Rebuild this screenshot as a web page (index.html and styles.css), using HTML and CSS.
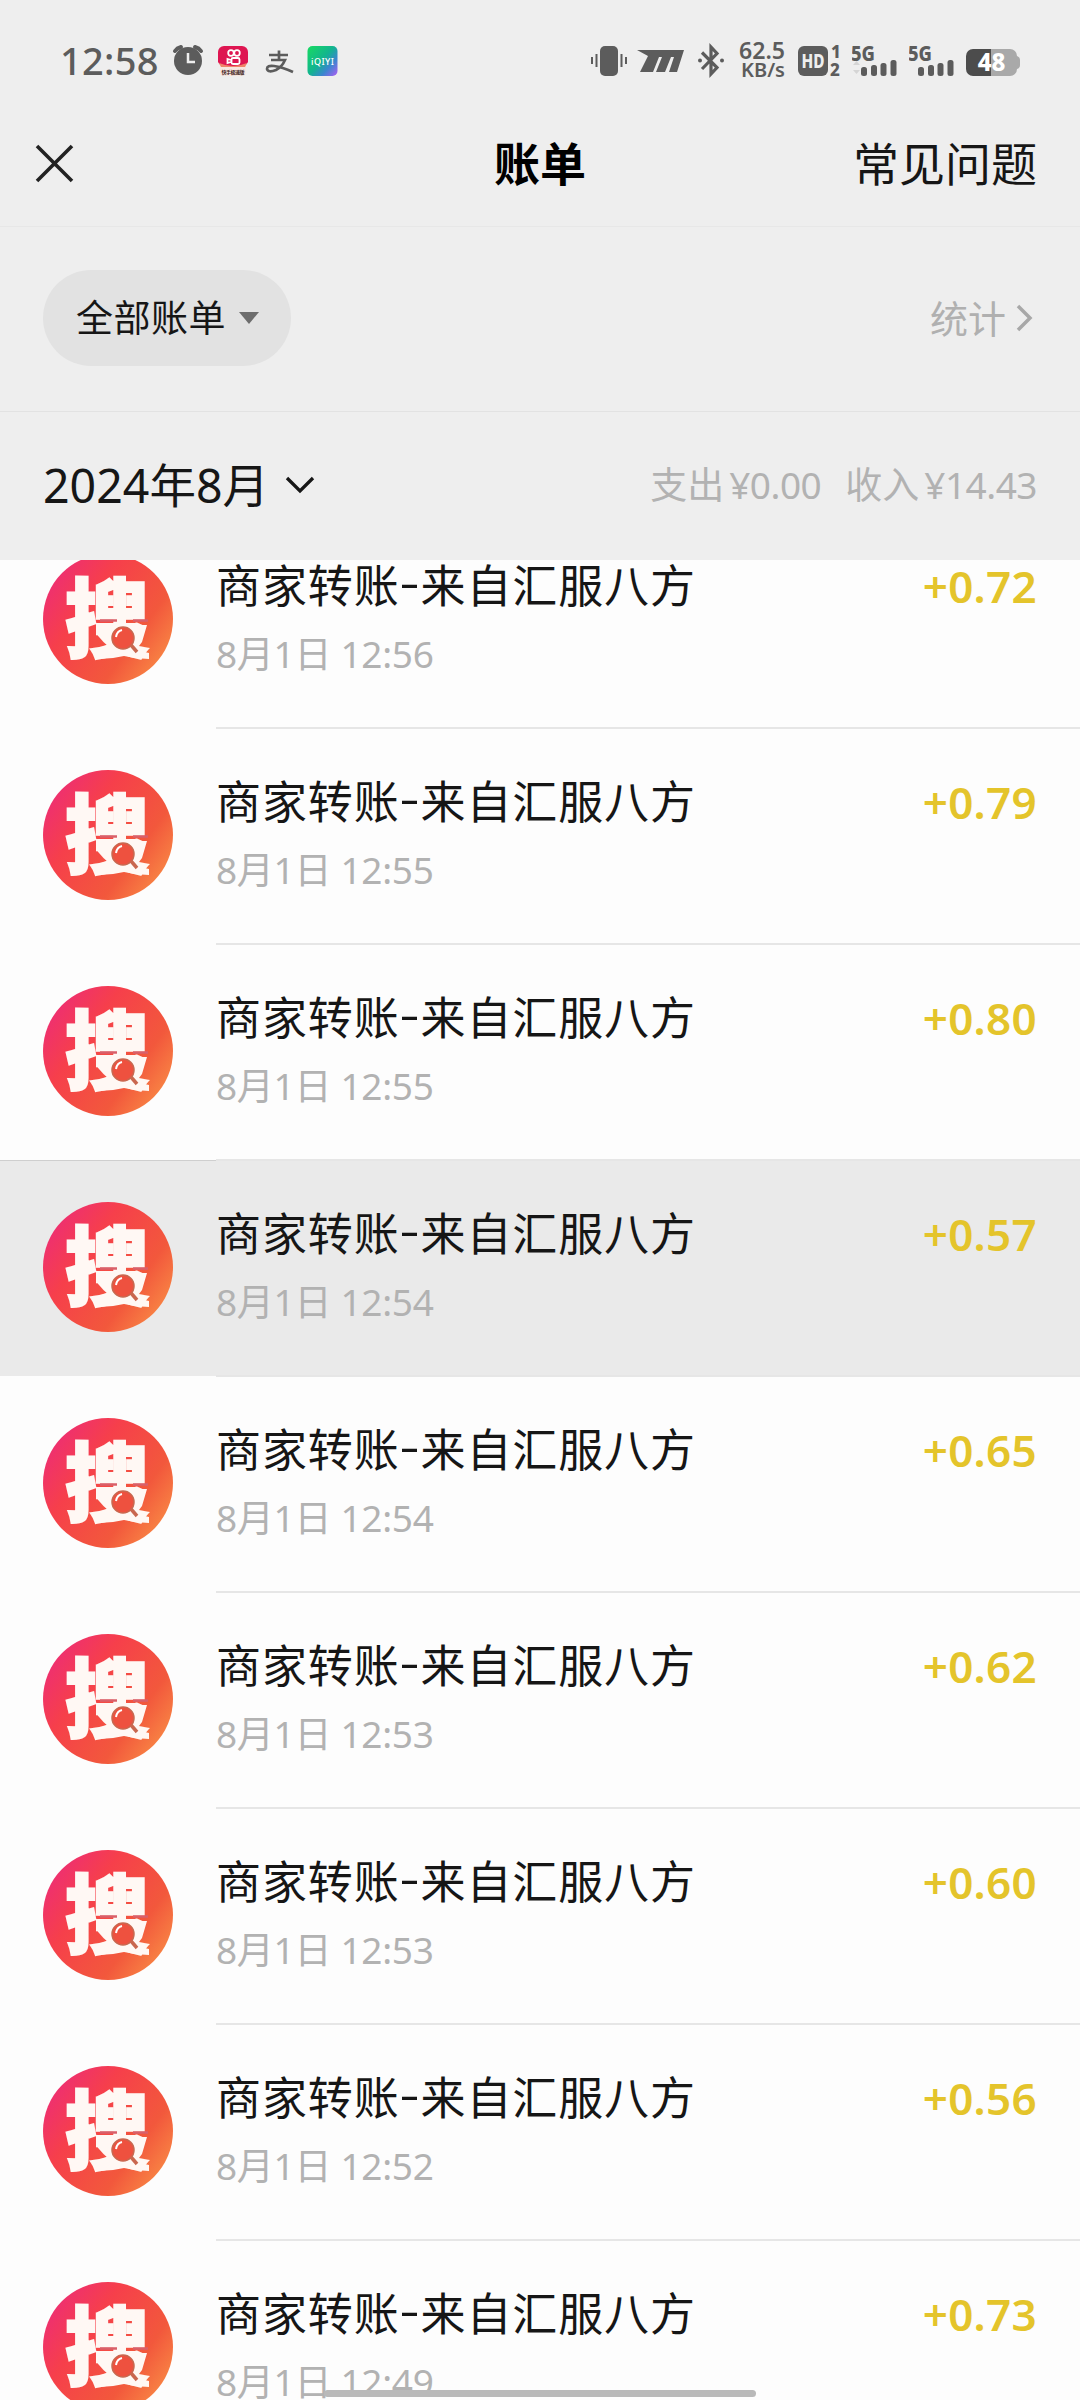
FILE: index.html
```html
<!DOCTYPE html>
<html lang="zh-CN">
<head>
<meta charset="utf-8">
<title>账单</title>
<link rel="stylesheet" href="styles.css">
</head>
<body>
<svg class="defs" width="0" height="0" aria-hidden="true">
  <defs>
    <linearGradient id="brand" x1="0.05" y1="0.2" x2="0.95" y2="0.85">
      <stop offset="0" stop-color="#ee2f72"/>
      <stop offset="0.3" stop-color="#f63f4b"/>
      <stop offset="0.72" stop-color="#f2583c"/>
      <stop offset="1" stop-color="#f98a45"/>
    </linearGradient>
    <linearGradient id="iqiyi" x1="0" y1="0.1" x2="1" y2="1">
      <stop offset="0" stop-color="#17d765"/>
      <stop offset="0.45" stop-color="#12b48f"/>
      <stop offset="0.7" stop-color="#3a86cf"/>
      <stop offset="1" stop-color="#b05cf5"/>
    </linearGradient>
    <symbol id="avatar" viewBox="0 0 130 130">
      <circle cx="65" cy="65" r="65" fill="url(#brand)"/>
      <text class="logo-char" x="64" y="97" text-anchor="middle" textLength="84" lengthAdjust="spacingAndGlyphs">搜</text>
      <path d="M55 71h49l-5 17-6 8 13 3v6q-13 0-25-3-12 3-25 3V94l8-3-8-10z" fill="#fff8f4"/>
      <path d="M57 66.500h17M90 66.500h15" stroke="#d9606a" stroke-width="2.500"/>
      <circle cx="80" cy="84" r="11" fill="#ee513f" stroke="#c9674f" stroke-width="1.500"/>
      <path d="M73 83q1-6 6-7" fill="none" stroke="#fff" stroke-width="2"/>
      <path d="M88 91l6 7" stroke="#c9674f" stroke-width="3.500"/>
    </symbol>
    <symbol id="signal" viewBox="0 0 46 44">
      <text class="net" x="-1" y="23" textLength="24" lengthAdjust="spacingAndGlyphs">5G</text>
      <g fill="#5c5c5c">
        <rect x="9" y="29" width="6" height="9" rx="2.500"/>
        <rect x="19" y="27" width="6" height="11" rx="2.500"/>
        <rect x="28.500" y="25" width="6" height="13" rx="2.500"/>
        <rect x="38.500" y="22" width="6" height="16" rx="2.500"/>
      </g>
    </symbol>
  </defs>
</svg>
<div class="screen">
  <header class="top">
    <div class="status">
      <div class="status-left">
        <span class="clock">12:58</span>
        <svg class="alarm" width="32" height="44" viewBox="0 0 32 44">
          <g fill="none" stroke="#5c5c5c" stroke-width="4" stroke-linecap="round"><path d="M3 13q2-3 6-4M29 13q-2-3-6-4"/></g>
          <circle cx="16" cy="23" r="14" fill="#5c5c5c"/>
          <path d="M16 15v9h7" fill="none" stroke="#eee" stroke-width="2.500"/>
        </svg>
        <svg class="kwai" width="30" height="44" viewBox="0 0 30 44">
          <path d="M6 8h18a6 6 0 0 1 6 6v10q-2 4-7 5H7q-5-1-7-5V14a6 6 0 0 1 6-6z" fill="#de1551"/>
          <path d="M2 28h26v6a4 4 0 0 1-4 4H6a4 4 0 0 1-4-4z" fill="#f8e6df"/>
          <path d="M1 25q14 6 28 0l-2 4H3z" fill="#f08468"/>
          <g fill="none" stroke="#fff" stroke-width="1.800"><circle cx="13" cy="15" r="2.800"/><circle cx="19" cy="15" r="2.800"/><rect x="13.500" y="20" width="8" height="6" rx="1.500"/><path d="M13 22l-3.500-1v4l3.500-1"/></g>
          <text class="kwai-name" x="15" y="36" text-anchor="middle" textLength="23">快手极速版</text>
        </svg>
        <svg class="alipay" width="29" height="44" viewBox="0 0 29 44">
          <path d="M4 17h19M14 12.500v9M6 22h14q-3 7-9 10-8 3-9-1 0-4 7-3 8 1 19 6" fill="none" stroke="#5c5c5c" stroke-width="2.700"/>
        </svg>
        <svg class="iqiyi" width="31" height="44" viewBox="0 0 31 44">
          <rect x="0.500" y="8" width="30" height="30" rx="5" fill="url(#iqiyi)"/>
          <text class="iqiyi-name" x="15.500" y="26.500" text-anchor="middle" textLength="23">iQIYI</text>
        </svg>
      </div>
      <div class="status-right">
        <svg width="36" height="44" viewBox="0 0 36 44">
          <rect x="9" y="8" width="18" height="30" rx="5" fill="#5c5c5c"/>
          <path d="M1 19v7M5.500 16v13M30.500 16v13M35 19v7" stroke="#5c5c5c" stroke-width="2"/>
        </svg>
        <svg class="maker" width="47" height="44" viewBox="0 0 47 44">
          <path d="M0 12h47l-7 22h-8l5-15h-3l-6 15h-9l6-15h-3l-6 15H3l8-16z" fill="#5c5c5c"/>
        </svg>
        <svg class="bluetooth" width="26" height="44" viewBox="0 0 26 44">
          <path d="M4 14.500l15 15-6 6.500V9l6 6.500L4 31" fill="none" stroke="#5c5c5c" stroke-width="3.200"/>
          <circle cx="2" cy="22.500" r="2" fill="#5c5c5c"/><circle cx="24" cy="22.500" r="2" fill="#5c5c5c"/>
        </svg>
        <svg class="speed" width="47" height="44" viewBox="0 0 47 44">
          <text class="rate" x="0" y="20.500" textLength="46" lengthAdjust="spacingAndGlyphs">62.5</text>
          <text class="unit" x="2" y="39" textLength="44" lengthAdjust="spacingAndGlyphs">KB/s</text>
        </svg>
        <svg width="43" height="44" viewBox="0 0 43 44">
          <rect x="0" y="8" width="30" height="30" rx="6" fill="#5c5c5c"/>
          <text class="hd" x="15" y="30" text-anchor="middle" textLength="23" lengthAdjust="spacingAndGlyphs">HD</text>
          <text class="sim" x="33" y="20">1</text><text class="sim" x="32" y="38">2</text>
        </svg>
        <svg class="sig" width="46" height="44" viewBox="0 0 46 44"><use href="#signal"/><path d="M1 27l3.500-4 3.500 4zM1 32l3.500 4 3.500-4z" fill="#d5d5d5"/></svg>
        <svg class="sig" width="46" height="44" viewBox="0 0 46 44"><use href="#signal"/></svg>
        <svg width="54" height="44" viewBox="0 0 54 44">
          <path d="M25 11h19a7 7 0 0 1 7 7q3 1 3 4v5q0 3-3 4a7 7 0 0 1-7 7H25z" fill="#a9a9a9"/>
          <path d="M25 11H7a7 7 0 0 0-7 7v13a7 7 0 0 0 7 7h18z" fill="#4c4c4c"/>
          <text class="battery-level" x="25.500" y="33" text-anchor="middle">48</text>
        </svg>
      </div>
    </div>
    <nav class="nav">
      <svg class="close" width="39" height="39" viewBox="0 0 39 39"><path d="M2 2l35 35M37 2L2 37" stroke="#222" stroke-width="3.600"/></svg>
      <h1>账单</h1>
      <span class="faq">常见问题</span>
    </nav>
    <div class="filter">
      <div class="pill"><span>全部账单</span><svg width="20" height="12" viewBox="0 0 20 12"><path d="M0 0h20L10 12z" fill="#6d6d6d"/></svg></div>
      <div class="stats"><span>统计</span><svg width="17" height="28" viewBox="0 0 17 28"><path d="M2 2l12 12L2 26" fill="none" stroke="#a8a8a8" stroke-width="3.500"/></svg></div>
    </div>
    <div class="month">
      <div class="month-name">2024年8月<svg width="30" height="18" viewBox="0 0 30 18"><path d="M2 2l13 13L28 2" fill="none" stroke="#161616" stroke-width="3.300"/></svg></div>
      <div class="totals"><span>支出</span><span class="sum">¥0.00</span><span class="income">收入</span><span class="sum">¥14.43</span></div>
    </div>
  </header>
  <main class="list">
    <article class="row"><svg class="avatar"><use href="#avatar"/></svg><div class="info"><div class="name">商家转账<span class="dash">-</span>来自汇服八方</div><div class="time">8月1日 12:56</div></div><div class="amount">+0.72</div></article>
    <article class="row"><svg class="avatar"><use href="#avatar"/></svg><div class="info"><div class="name">商家转账<span class="dash">-</span>来自汇服八方</div><div class="time">8月1日 12:55</div></div><div class="amount">+0.79</div></article>
    <article class="row"><svg class="avatar"><use href="#avatar"/></svg><div class="info"><div class="name">商家转账<span class="dash">-</span>来自汇服八方</div><div class="time">8月1日 12:55</div></div><div class="amount">+0.80</div></article>
    <article class="row pressed"><svg class="avatar"><use href="#avatar"/></svg><div class="info"><div class="name">商家转账<span class="dash">-</span>来自汇服八方</div><div class="time">8月1日 12:54</div></div><div class="amount">+0.57</div></article>
    <article class="row"><svg class="avatar"><use href="#avatar"/></svg><div class="info"><div class="name">商家转账<span class="dash">-</span>来自汇服八方</div><div class="time">8月1日 12:54</div></div><div class="amount">+0.65</div></article>
    <article class="row"><svg class="avatar"><use href="#avatar"/></svg><div class="info"><div class="name">商家转账<span class="dash">-</span>来自汇服八方</div><div class="time">8月1日 12:53</div></div><div class="amount">+0.62</div></article>
    <article class="row"><svg class="avatar"><use href="#avatar"/></svg><div class="info"><div class="name">商家转账<span class="dash">-</span>来自汇服八方</div><div class="time">8月1日 12:53</div></div><div class="amount">+0.60</div></article>
    <article class="row"><svg class="avatar"><use href="#avatar"/></svg><div class="info"><div class="name">商家转账<span class="dash">-</span>来自汇服八方</div><div class="time">8月1日 12:52</div></div><div class="amount">+0.56</div></article>
    <article class="row"><svg class="avatar"><use href="#avatar"/></svg><div class="info"><div class="name">商家转账<span class="dash">-</span>来自汇服八方</div><div class="time">8月1日 12:49</div></div><div class="amount">+0.73</div></article>
  </main>
  <div class="home-bar"></div>
</div>
</body>
</html>
```
FILE: styles.css
```css
* { box-sizing: border-box; }
body { margin: 0; background: #fdfdfd; font-family: "Noto Sans", "Noto Sans CJK SC", sans-serif; color: #161616; }
svg { display: block; flex: none; }
.defs { position: absolute; }
.screen { position: relative; width: 1080px; height: 2400px; overflow: hidden; display: flex; flex-direction: column; }
.top { height: 560px; flex: none; background: #eeeeee; }

.status { height: 102px; padding: 18px 60px 0 60px; display: flex; align-items: center; justify-content: space-between; color: #5c5c5c; }
.status-left, .status-right { display: flex; align-items: center; }
.clock { width: 112px; font-size: 38px; font-weight: 500; line-height: 44px; letter-spacing: 0.3px; }
.kwai { margin-left: 14px; }
.alipay { margin-left: 17px; }
.iqiyi { margin-left: 13px; }
.kwai-name { font-size: 5px; font-weight: 700; fill: #3a2020; }
.iqiyi-name { font-size: 9px; font-weight: 500; fill: #fff; }
.status-right { gap: 11px; }
.maker { margin-left: -1px; }
.bluetooth { margin-left: 3px; }
.speed { margin-left: 4px; margin-right: 1px; }
.rate { font-size: 24px; font-weight: 600; fill: #5c5c5c; }
.unit { font-size: 20px; font-weight: 600; fill: #5c5c5c; }
.hd { font-size: 20px; font-weight: 800; fill: #eee; }
.net { font-size: 21px; font-weight: 800; fill: #5c5c5c; }
.sim { font-size: 17px; font-weight: 800; fill: #5c5c5c; }
.battery-level { font-size: 24px; font-weight: 800; fill: #fff; }

.nav { height: 125px; padding: 0 43px 2px 35px; display: grid; grid-template-columns: 1fr auto 1fr; align-items: center; border-bottom: 1px solid #e7e7e7; font-size: 46px; line-height: 60px; }
.nav h1 { margin: 0 0 0 8px; font-size: 46px; font-weight: 600; color: #000; }
.faq { justify-self: end; }

.filter { height: 185px; padding: 0 43px; display: flex; align-items: center; justify-content: space-between; border-bottom: 1px solid #e2e2e2; }
.pill { width: 248px; height: 96px; padding-left: 33px; border-radius: 48px; background: #e2e2e2; display: flex; align-items: center; gap: 13px; font-size: 37px; letter-spacing: 0.5px; margin-bottom: 3px; }
.pill span, .stats span { padding-bottom: 4px; }
.stats { display: flex; align-items: center; gap: 10px; color: #b0b0b0; font-size: 38px; margin-right: 4px; margin-bottom: 2px; }

.month { height: 148px; padding: 0 43px 3px; display: flex; align-items: center; justify-content: space-between; }
.month-name { display: flex; align-items: center; gap: 16px; font-size: 46.500px; line-height: 60px; }
.totals { display: flex; align-items: baseline; font-size: 37px; line-height: 60px; color: #b2b2b2; }
.sum { margin-left: 5px; letter-spacing: -0.5px; }
.income { margin-left: 24px; }

.list { flex: 1; min-height: 0; overflow: hidden; }
.row { position: relative; height: 216px; padding: 42px 43px 0 43px; display: flex; align-items: flex-start; background: #fdfdfd; }
.row:first-child { margin-top: -48px; }
.row::after { content: ""; position: absolute; left: 216px; right: 0; bottom: -1px; height: 2px; background: #e6e6e6; z-index: 1; }
.row.pressed { background: #eaeaea; border-top: 1px solid #cfcfcf; padding-top: 41px; }
.avatar { width: 130px; height: 130px; }
.logo-char { font-family: "Noto Sans CJK SC", sans-serif; font-weight: 900; font-size: 86px; fill: #fff8f4; stroke: #fff8f4; stroke-width: 2px; }
.info { margin-left: 43px; flex: 1; }
.name { margin-top: 2px; font-size: 45px; line-height: 60px; letter-spacing: 0.9px; white-space: nowrap; }
.dash { font-size: 62px; font-weight: 300; line-height: 0; }
.time { margin-top: 12px; font-size: 37px; line-height: 52px; letter-spacing: -0.3px; color: #b2b2b2; white-space: nowrap; }
.amount { font-size: 44px; line-height: 64px; font-weight: 600; color: #e4c42b; letter-spacing: 0.3px; }
.home-bar { position: absolute; left: 324px; top: 2390px; width: 432px; height: 7px; border-radius: 4px; background: #b9b9b9; z-index: 3; }
```
